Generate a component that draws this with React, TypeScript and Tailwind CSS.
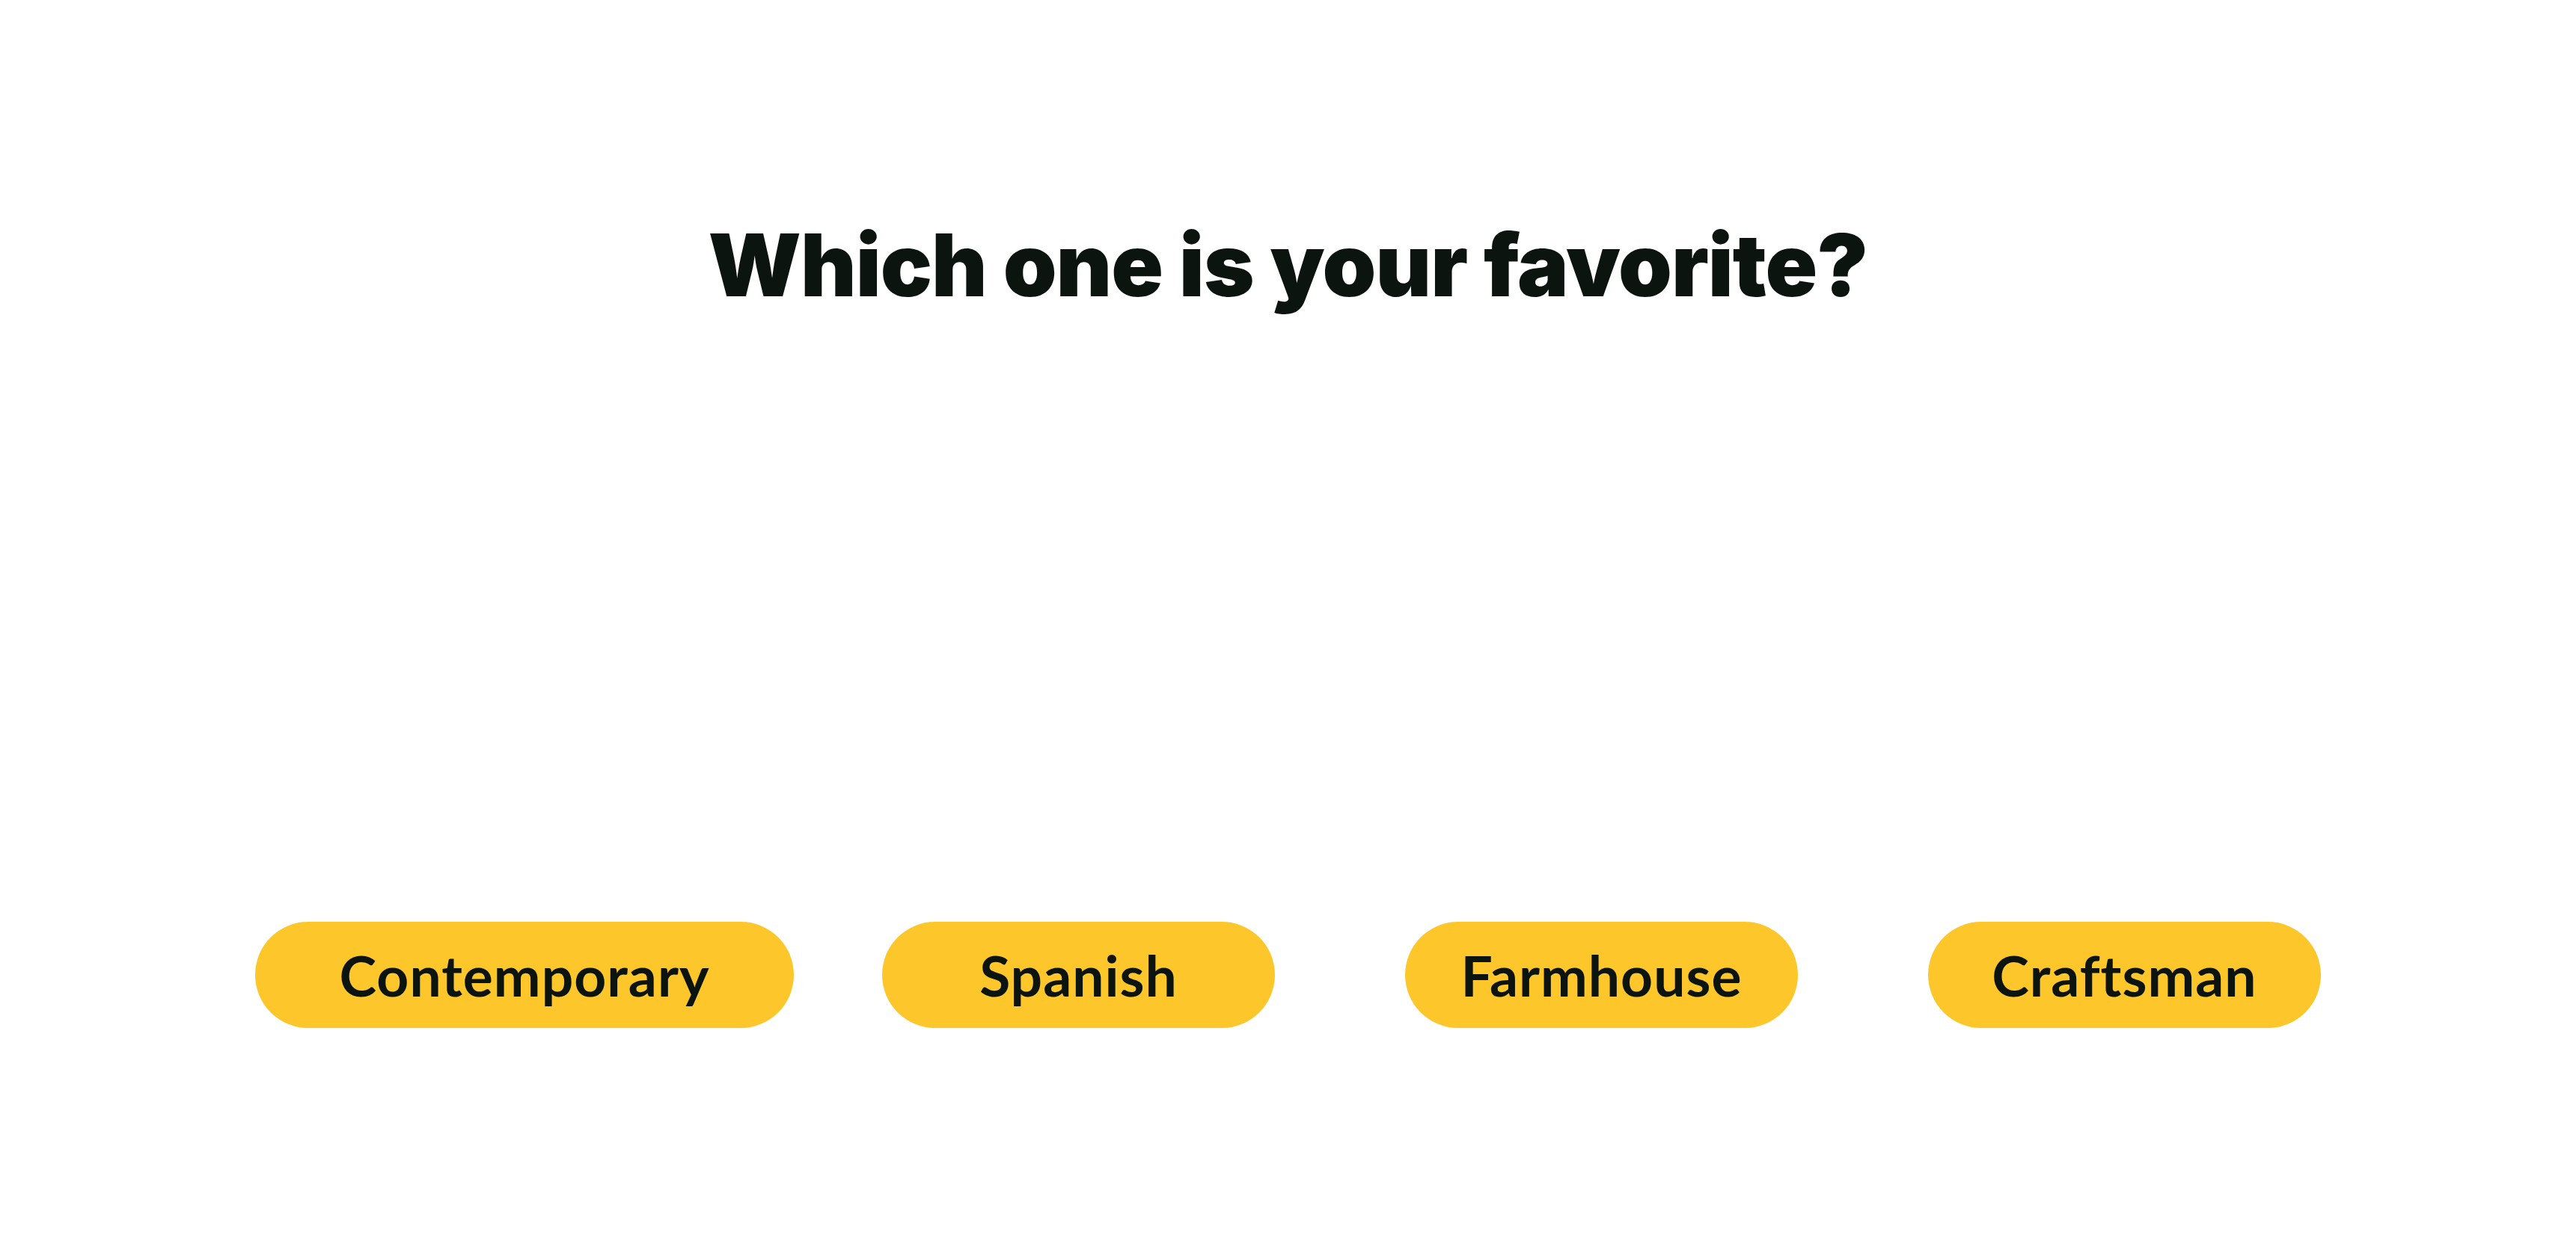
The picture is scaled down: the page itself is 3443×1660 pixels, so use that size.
const styles = [
  { label: "Contemporary", width: "w-[720px]", gap: "" },
  { label: "Spanish", width: "w-[525px]", gap: "ml-[118px]" },
  { label: "Farmhouse", width: "w-[525px]", gap: "ml-[174px]" },
  { label: "Craftsman", width: "w-[525px]", gap: "ml-[174px]" },
];

export default function App() {
  return (
    <div className="min-h-screen bg-white flex flex-col items-center text-[#0c1410] font-['Lato','Liberation_Sans',sans-serif]">
      <h1 className="pt-[297px] text-[115px] leading-none font-black tracking-[-1px] font-['Inter','Lato',sans-serif]">
        Which one is your favorite?
      </h1>
      <div className="mt-[820px] flex items-center">
        {styles.map(s => (
          <button
            key={s.label}
            className={`${s.width} ${s.gap} h-[142px] rounded-full bg-[#fdc62a] flex items-center justify-center text-[75px] leading-none font-bold tracking-[1px]`}
          >
            {s.label}
          </button>
        ))}
      </div>
    </div>
  );
}
